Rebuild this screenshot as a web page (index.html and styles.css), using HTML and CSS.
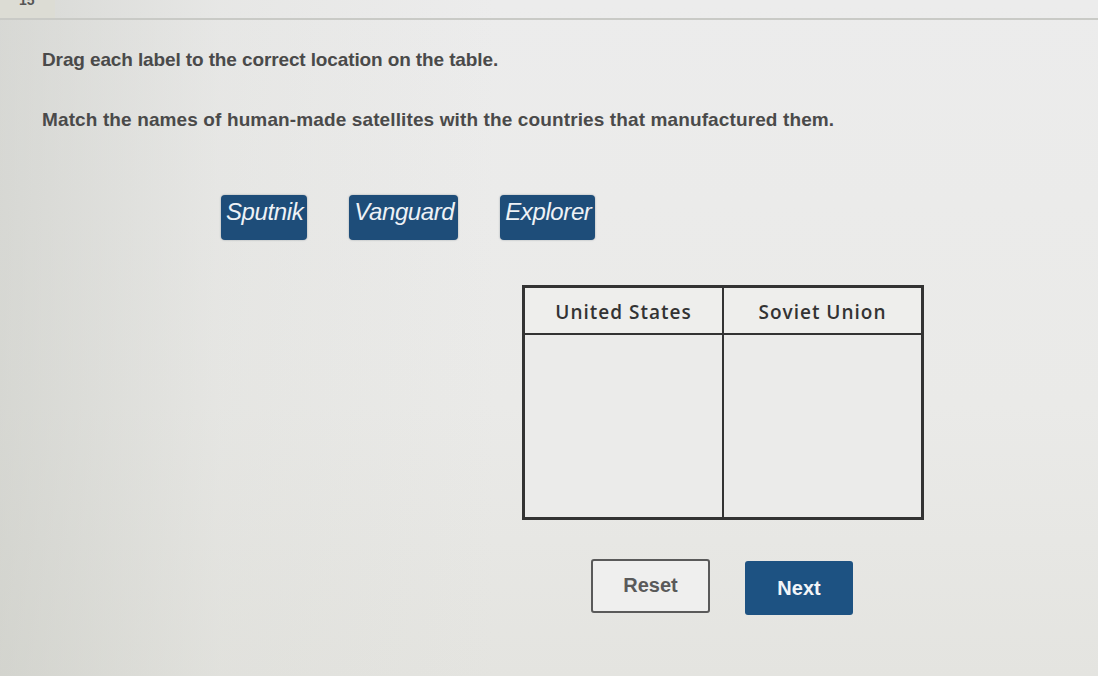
FILE: index.html
```html
<!DOCTYPE html>
<html lang="en">
<head>
<meta charset="utf-8">
<title>Question 15</title>
<link rel="stylesheet" href="styles.css">
</head>
<body>
  <header class="topbar">
    <div class="qnum"><span>15</span></div>
  </header>

  <main class="question">
    <p class="prompt">Drag each label to the correct location on the table.</p>
    <p class="prompt task">Match the names of human-made satellites with the countries that manufactured them.</p>

    <div class="labels">
      <span class="chip">Sputnik</span>
      <span class="chip">Vanguard</span>
      <span class="chip">Explorer</span>
    </div>

    <table class="drop-table">
      <thead>
        <tr><th>United States</th><th>Soviet Union</th></tr>
      </thead>
      <tbody>
        <tr><td></td><td></td></tr>
      </tbody>
    </table>

    <div class="actions">
      <button class="btn btn-reset" type="button">Reset</button>
      <button class="btn btn-next" type="button">Next</button>
    </div>
  </main>
</body>
</html>
```

FILE: styles.css
```css
* { box-sizing: border-box; }

html, body {
  margin: 0;
  height: 100%;
}

body {
  width: 1098px;
  height: 676px;
  overflow: hidden;
  font-family: "Liberation Sans", Arial, sans-serif;
  color: #363636;
  background:
    linear-gradient(90deg, rgba(190,192,184,0.45) 0%, rgba(215,216,210,0.25) 20%, rgba(235,235,235,0) 45%),
    linear-gradient(180deg, #ececec 0%, #eaeae8 60%, #e4e4e0 100%);
}

.topbar {
  height: 20px;
  border-bottom: 2px solid #c9cac6;
  display: flex;
}

.qnum {
  width: 55px;
  height: 18px;
  background: #dcdcd4;
  overflow: hidden;
  position: relative;
}

.qnum span {
  position: absolute;
  left: 19px;
  top: -8px;
  font-size: 14px;
  line-height: 16px;
  font-weight: bold;
  color: #555;
}

.question {
  padding-left: 42px;
}

.prompt {
  margin: 29px 0 0;
  font-size: 19px;
  font-weight: bold;
  line-height: 22px;
  color: #4a4a4a;
  letter-spacing: -0.12px;
}

.prompt.task {
  margin-top: 38px;
  letter-spacing: 0.12px;
}

.labels {
  display: flex;
  gap: 42px;
  margin: 64px 0 0 179px;
}

.chip {
  display: inline-block;
  height: 45px;
  padding: 4px 4px 0 5px;
  background: #1e4d79;
  border-radius: 4px;
  color: #eef2f6;
  font-style: italic;
  font-size: 24px;
  letter-spacing: -0.4px;
  line-height: 26px;
  box-shadow: 0 0 2px rgba(30,50,70,0.4);
}

.drop-table {
  margin: 45px 0 0 480px;
  border-collapse: collapse;
  border: 3px solid #333;
  width: 402px;
}

.drop-table th,
.drop-table td {
  border: 2px solid #333;
  width: 50%;
  background: #eeeeec;
}

.drop-table th {
  height: 47px;
  padding: 3px 0 0;
  font-family: "Open Sans", sans-serif;
  font-weight: 600;
  font-size: 19px;
  letter-spacing: 1px;
  color: #333;
}

.drop-table td {
  height: 185px;
  background: #ebebea;
}

.actions {
  display: flex;
  gap: 35px;
  align-items: flex-start;
  margin: 39px 0 0 549px;
}

.btn {
  font-family: "Liberation Sans", Arial, sans-serif;
  font-weight: bold;
  font-size: 20px;
  border-radius: 3px;
  cursor: pointer;
}

.btn-reset {
  width: 119px;
  height: 54px;
  background: #efefee;
  border: 2px solid #5a5a5a;
  color: #5a5a5a;
  padding-bottom: 2px;
}

.btn-next {
  width: 108px;
  height: 54px;
  margin-top: 2px;
  background: #1d5282;
  border: none;
  color: #f2f5f8;
}
```
